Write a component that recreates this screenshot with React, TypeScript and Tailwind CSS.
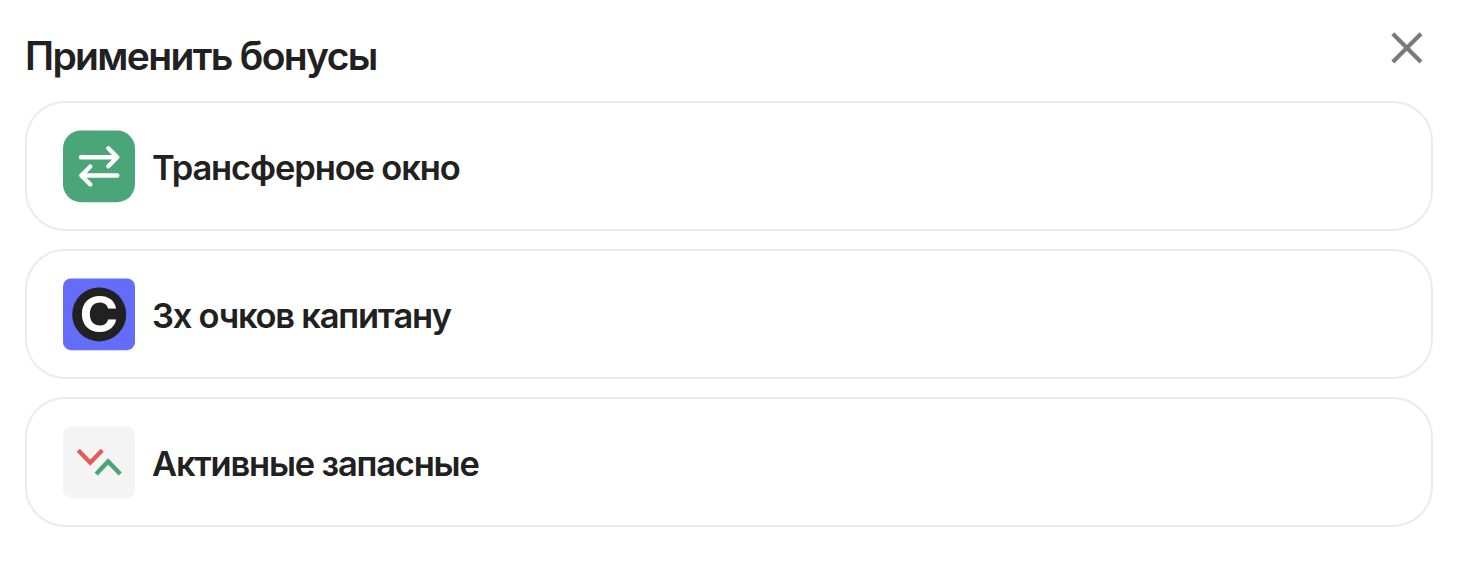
import type { ReactNode } from "react";

function TransferIcon() {
  return (
    <svg className="size-[72px] shrink-0 overflow-visible" viewBox="0 0 72 72" fill="none">
      <rect y="0.4" width="72" height="71.8" rx="18" fill="#4aa578" />
      <g stroke="#fff" strokeWidth="4.4" strokeLinecap="round" strokeLinejoin="round">
        <path d="M18 27.3h36M45.3 18.3l9 9-9 9" />
        <path d="M54.3 45.5h-36M27.3 36.5l-9 9 9 9" />
      </g>
    </svg>
  );
}

function CaptainIcon() {
  return (
    <svg className="size-[72px] shrink-0 overflow-visible" viewBox="0 0 72 72">
      <rect y="0.4" width="72" height="71.8" rx="8" fill="#646cfa" />
      <circle cx="36.2" cy="36.4" r="27" fill="#212121" />
      <text
        transform="translate(35.9 54.1) scale(1.07 1)"
        textAnchor="middle"
        className="fill-white font-['Inter',sans-serif] text-[49px] font-bold"
      >
        C
      </text>
    </svg>
  );
}

function BenchIcon() {
  return (
    <svg className="size-[72px] shrink-0 overflow-visible" viewBox="0 0 72 72" fill="none" strokeWidth="4.4">
      <rect y="0.4" width="72" height="71.8" rx="8" fill="#f4f4f4" />
      <path d="M15.3 24.3L27.2 36.7L39.2 24.3" stroke="#e65a56" />
      <path d="M33.2 48L45.2 35.5L57.2 48" stroke="#4aa578" />
    </svg>
  );
}

type Bonus = { title: string; icon: ReactNode; tracking: string };

const bonuses: Bonus[] = [
  { title: "Трансферное окно", icon: <TransferIcon />, tracking: "tracking-[-1.13px]" },
  { title: "3х очков капитану", icon: <CaptainIcon />, tracking: "tracking-[-1.23px]" },
  { title: "Активные запасные", icon: <BenchIcon />, tracking: "tracking-[-1.2px]" },
];

export default function App() {
  return (
    <main className="h-[579px] bg-white pt-[31px] pr-[27px] pl-[25px] font-['Inter',sans-serif] text-[#212121]">
      <header className="flex h-[70px] items-start justify-between">
        <h1 className="text-[39px] leading-[50px] font-semibold tracking-[-1.65px] whitespace-nowrap">
          Применить бонусы
        </h1>
        <button type="button" aria-label="Закрыть" className="mr-[9px]">
          <svg className="size-[34px]" viewBox="0 0 34 34" fill="none">
            <path d="M2.8 2.8L31 31M31 2.8L2.8 31" stroke="#7a7a7a" strokeWidth="4.2" />
          </svg>
        </button>
      </header>
      <ul className="flex flex-col gap-[18px]">
        {bonuses.map(({ title, icon, tracking }) => (
          <li
            key={title}
            className="flex h-[130px] items-center gap-[17px] rounded-[40px] border-2 border-[#ebebeb] px-9"
          >
            {icon}
            <span className={`pt-1 text-[34.5px] leading-[44px] font-semibold whitespace-nowrap ${tracking}`}>
              {title}
            </span>
          </li>
        ))}
      </ul>
    </main>
  );
}
